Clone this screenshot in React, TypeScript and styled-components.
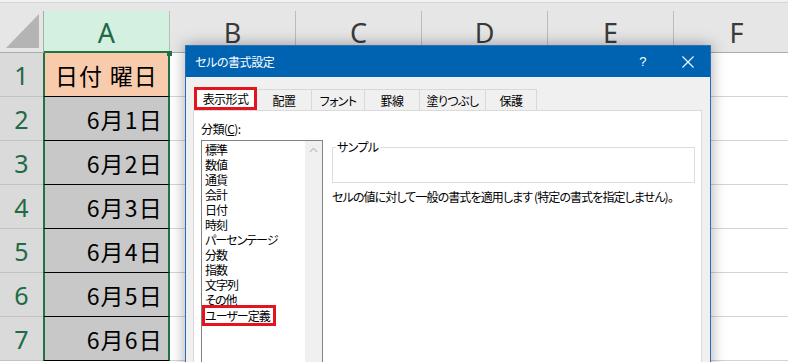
import * as React from 'react';
import styled, { createGlobalStyle } from 'styled-components';

const GlobalStyle = createGlobalStyle`
    html, body {
        margin: 0;
        padding: 0;
        background: #ffffff;
    }
    body {
        width: 788px;
        height: 362px;
        overflow: hidden;
    }
`;

const Screen = styled.div`
    position: relative;
    width: 788px;
    height: 362px;
    overflow: hidden;
    background: #ffffff;
`;

const TopStrip = styled.div`
    height: 3px;
    background: #f1f1f1;
    border-bottom: 1px solid #d6d6d6;
    box-sizing: border-box;
`;

const Sheet = styled.div`
    display: grid;
    grid-template-columns: 44px repeat(6, 126px);
    grid-template-rows: 42px repeat(7, 44px);
    padding-top: 8px;
    background: #e6e6e6;
    font-family: "Noto Sans CJK JP", sans-serif;
`;

const Corner = styled.div`
    display: flex;
    align-items: flex-end;
    justify-content: flex-end;
    padding: 0 4px 4px 0;
    background: #e6e6e6;
    border-bottom: 1px solid #ababab;
    border-right: 1px solid #ababab;
`;

const CornerTriangle = styled.div`
    width: 33px;
    height: 34px;
    background: #b4b4b4;
    clip-path: polygon(100% 0, 100% 100%, 0 100%);
`;

const ColHead = styled.div<{ $active?: boolean }>`
    display: flex;
    align-items: center;
    justify-content: center;
    box-sizing: border-box;
    font-family: "Noto Sans", "Open Sans", sans-serif;
    font-size: 27px;
    padding-top: 2px;
    color: ${(p) => (p.$active ? '#1e6b45' : '#3a3a3a')};
    background: ${(p) => (p.$active ? '#d3f0e0' : '#e6e6e6')};
    border-right: 1px solid #bcbcbc;
    border-bottom: ${(p) => (p.$active ? '2px solid #217346' : '1px solid #ababab')};
`;

const RowHead = styled.div`
    display: flex;
    align-items: center;
    justify-content: center;
    box-sizing: border-box;
    font-family: "Noto Sans", "Open Sans", sans-serif;
    font-size: 25px;
    color: #1e6b45;
    background: #dadada;
    border-bottom: 1px solid #c2c2c2;
    border-right: 1px solid #ababab;
`;

const DataCell = styled.div<{ $head?: boolean }>`
    position: relative;
    display: flex;
    align-items: center;
    justify-content: ${(p) => (p.$head ? 'center' : 'flex-end')};
    box-sizing: border-box;
    padding-right: ${(p) => (p.$head ? '0' : '5px')};
    font-size: 23px;
    letter-spacing: 1.2px;
    color: #000000;
    background: ${(p) => (p.$head ? '#f8cbad' : '#c8c8c8')};
    border-left: 2px solid #217346;
    border-right: 2px solid #217346;
    border-bottom: 1px solid #000000;
    margin-left: -1px;
`;

const Handle = styled.span`
    position: absolute;
    right: -4px;
    top: -2px;
    width: 5px;
    height: 5px;
    background: #217346;
`;

const EmptyCell = styled.div`
    background: #ffffff;
    border-right: 1px solid #d4d4d4;
    border-bottom: 1px solid #d4d4d4;
`;

const Dialog = styled.div`
    position: absolute;
    left: 185px;
    top: 45px;
    width: 526px;
    height: 340px;
    box-sizing: border-box;
    display: flex;
    flex-direction: column;
    background: #f0f0f0;
    border: 1px solid #2a6fb8;
    box-shadow: 0 0 14px rgba(0, 0, 0, 0.35);
    font-family: "Noto Sans CJK JP", sans-serif;
    font-size: 12px;
    font-feature-settings: "palt";
    letter-spacing: -0.6px;
    color: #000000;
`;

const TitleBar = styled.div`
    display: flex;
    align-items: center;
    height: 31px;
    background: #0063b1;
    color: #ffffff;
    padding-left: 9px;
`;

const Title = styled.div`
    flex: 1;
    letter-spacing: -0.4px;
`;

const TitleButton = styled.div`
    width: 45px;
    height: 31px;
    display: flex;
    align-items: center;
    justify-content: center;
    font-family: "Liberation Sans", sans-serif;
    font-size: 13px;
`;

const Body = styled.div`
    flex: 1;
    display: flex;
    flex-direction: column;
    padding: 10px 8px 0 7px;
`;

const TabRow = styled.div`
    display: flex;
    align-items: flex-end;
    height: 23px;
`;

const Tab = styled.div<{ $w: number; $selected?: boolean }>`
    width: ${(p) => p.$w}px;
    height: ${(p) => (p.$selected ? 23 : 21)}px;
    box-sizing: border-box;
    display: flex;
    align-items: center;
    justify-content: center;
    background: ${(p) => (p.$selected ? '#ffffff' : '#f0f0f0')};
    border: ${(p) => (p.$selected ? '3px solid #e3141d' : '1px solid #d9d9d9')};
    border-bottom: ${(p) => (p.$selected ? '3px solid #e3141d' : 'none')};
    margin-left: ${(p) => (p.$selected ? '1px' : '-1px')};
    padding-top: ${(p) => (p.$selected ? '0' : '1px')};
    position: relative;
    z-index: ${(p) => (p.$selected ? 2 : 1)};
`;

const Panel = styled.div`
    flex: 1;
    display: flex;
    gap: 9px;
    background: #ffffff;
    border: 1px solid #dadada;
    padding: 10px 6px 0 7px;
`;

const LeftCol = styled.div`
    display: flex;
    flex-direction: column;
    width: 122px;
`;

const Label = styled.div`
    line-height: 15px;
    margin-bottom: 4px;
    u {
        text-decoration: underline;
    }
`;

const ListBox = styled.div`
    flex: 1;
    display: flex;
    border: 1px solid #828282;
    background: #ffffff;
`;

const ListItems = styled.div`
    flex: 1;
    padding: 1px 0 0 3px;
`;

const ListItem = styled.div<{ $marked?: boolean }>`
    line-height: 15px;
    letter-spacing: -1px;
    ${(p) =>
        p.$marked
            ? `
        display: inline-block;
        border: 3px solid #e3141d;
        margin: -2px 0 0 -3px;
        padding-right: 3px;
    `
            : ''}
`;

const ScrollBar = styled.div`
    width: 17px;
    background: #f0f0f0;
    display: flex;
    justify-content: center;
    padding-top: 6px;
`;

const RightCol = styled.div`
    flex: 1;
    display: flex;
    flex-direction: column;
    padding-top: 19px;
`;

const SampleGroup = styled.fieldset`
    margin: 0;
    padding: 0;
    min-width: 0;
    border: 1px solid #dcdcdc;
    legend {
        margin-left: 3px;
        padding: 0 1px;
        line-height: 14px;
    }
`;

const SampleArea = styled.div`
    height: 28px;
`;

const Description = styled.div`
    line-height: 15px;
    margin-top: 6px;
    white-space: nowrap;
    letter-spacing: -0.9px;
`;

const categories = ['標準', '数値', '通貨', '会計', '日付', '時刻', 'パーセンテージ', '分数', '指数', '文字列', 'その他'];
const tabs = [
    { label: '表示形式', w: 63, selected: true },
    { label: '配置', w: 56 },
    { label: 'フォント', w: 54 },
    { label: '罫線', w: 56 },
    { label: '塗りつぶし', w: 67 },
    { label: '保護', w: 52 },
];
const columns = ['A', 'B', 'C', 'D', 'E', 'F'];
const dates = ['6月1日', '6月2日', '6月3日', '6月4日', '6月5日', '6月6日'];

const App: React.FC = () => {
    const rows = ['日付 曜日', ...dates];

    return (
        <Screen>
            <GlobalStyle />
            <TopStrip />
            <Sheet>
                <Corner>
                    <CornerTriangle />
                </Corner>
                { columns.map((c) => (
                    <ColHead key={ c } $active={ c === 'A' }>{ c }</ColHead>
                )) }
                { rows.map((text, i) => (
                    <React.Fragment key={ i }>
                        <RowHead>{ i + 1 }</RowHead>
                        <DataCell $head={ i === 0 }>
                            { text }
                            { i === 0 && <Handle /> }
                        </DataCell>
                        { columns.slice(1).map((c) => (
                            <EmptyCell key={ c } />
                        )) }
                    </React.Fragment>
                )) }
            </Sheet>

            <Dialog>
                <TitleBar>
                    <Title>セルの書式設定</Title>
                    <TitleButton>?</TitleButton>
                    <TitleButton>
                        <svg width="12" height="12" viewBox="0 0 12 12">
                            <path d="M0.5 0.5 L11.5 11.5 M11.5 0.5 L0.5 11.5" stroke="#ffffff" strokeWidth="1.1" />
                        </svg>
                    </TitleButton>
                </TitleBar>
                <Body>
                    <TabRow>
                        { tabs.map((t) => (
                            <Tab key={ t.label } $w={ t.w } $selected={ t.selected }>{ t.label }</Tab>
                        )) }
                    </TabRow>
                    <Panel>
                        <LeftCol>
                            <Label>分類(<u>C</u>):</Label>
                            <ListBox>
                                <ListItems>
                                    { categories.map((c) => (
                                        <ListItem key={ c }>{ c }</ListItem>
                                    )) }
                                    <ListItem $marked>ユーザー定義</ListItem>
                                </ListItems>
                                <ScrollBar>
                                    <svg width="9" height="6" viewBox="0 0 9 6">
                                        <path d="M0.8 5 L4.5 1.3 L8.2 5" fill="none" stroke="#c2c2c2" strokeWidth="1.3" />
                                    </svg>
                                </ScrollBar>
                            </ListBox>
                        </LeftCol>
                        <RightCol>
                            <SampleGroup>
                                <legend>サンプル</legend>
                                <SampleArea />
                            </SampleGroup>
                            <Description>セルの値に対して一般の書式を適用します (特定の書式を指定しません)。</Description>
                        </RightCol>
                    </Panel>
                </Body>
            </Dialog>
        </Screen>
    );
};

export default App;
